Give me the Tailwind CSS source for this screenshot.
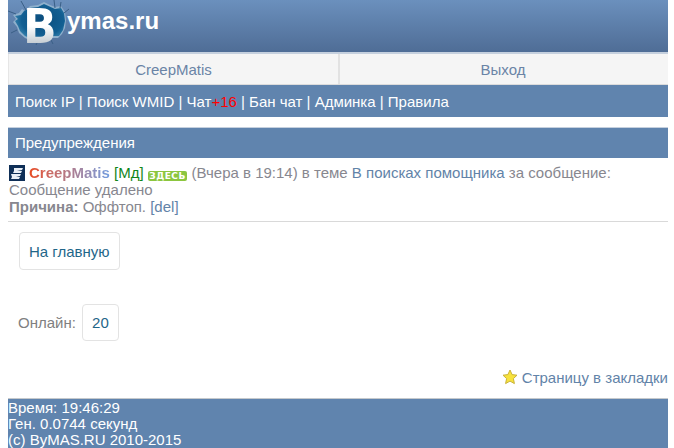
<!DOCTYPE html>
<html lang="ru">
  <head>
    <meta charset="UTF-8" />
    <title>ByMAS.RU</title>
    <script src="https://cdn.jsdelivr.net/npm/@tailwindcss/browser@4"></script>
  </head>
  <body class="bg-white text-[15px] leading-[17px] text-[#87878f] font-['Liberation_Sans',Arial,sans-serif] overflow-hidden h-[448px]">
    <div class="mx-2 w-[660px]">
      <!-- Logo -->
      <div class="relative h-[54px] border-b-2 border-[#c5d0de] bg-gradient-to-b from-[#6b90bd] to-[#4f6d96]">
        <svg class="absolute left-0 top-0" width="66" height="48" viewBox="0 0 66 48">
          <defs>
            <radialGradient id="hole" cx="0.55" cy="0.45" r="0.6">
              <stop offset="0" stop-color="#0b4c7c" />
              <stop offset="0.7" stop-color="#125f92" />
              <stop offset="1" stop-color="#3c86b0" />
            </radialGradient>
          </defs>
          <path d="M5 15 L11 13 L14 9 L17 11 L22 6 L30 5 L36 2 L42 5 L47 7 L53 6 L57 12 L58 20 L57 28 L54 34 L50 38 L43 38 L38 42 L30 41 L24 41 L17 38 L11 33 L9 27 L5 22 L8 19 Z" fill="#8fb0cc" />
          <path d="M7 16 L13 15 L16 11 L22 8 L30 7 L36 4 L47 9 L53 8 L56 13 L57 21 L55 30 L51 36 L43 36 L37 40 L24 39 L17 36 L12 31 L10 26 L7 21 L10 19 Z" fill="url(#hole)" />
          <path d="M0 11 L8 14 M13 1 L18 10 M46 0 L47 8 M53 2 L52 8 M61 9 L56 13 M30 41 L28 45 M42 38 L45 44 M9 30 L3 33" stroke="#3a5f86" stroke-width="1" fill="none" />
        </svg>
        <span class="absolute left-[15px] top-0 text-[48px] leading-[52px] font-bold font-['DejaVu_Sans',sans-serif] bg-gradient-to-b from-white from-50% to-[#a9b4bd] bg-clip-text text-transparent [transform:scaleX(.92)] origin-left">B</span>
        <span class="absolute left-[59px] top-[7px] text-[24px] leading-[28px] font-bold text-white">ymas.ru</span>
      </div>

      <!-- Nav -->
      <div class="flex h-[31px] bg-[#f5f5f5] border-b border-[#dcdcdc]">
        <a class="w-[330px] flex items-center justify-center text-[#6a84a6] border-l border-[#e6e6e6]">CreepMatis</a>
        <a class="flex-1 flex items-center justify-center pr-[2px] text-[#6a84a6] border-l-2 border-[#e2e2e2]">Выход</a>
      </div>

      <!-- Menu -->
      <div class="h-[32px] bg-[#6084ae] text-white px-[7px] flex items-center">
        <span>Поиск IP | Поиск WMID | Чат<span class="text-[#f00]">+16</span> | Бан чат | Админка | Правила</span>
      </div>

      <div class="mt-[10px] h-[31px] pb-[2px] bg-[#6084ae] text-white px-[7px] flex items-center border-t border-[#c5d0de]">Предупреждения</div>

      <!-- Warning -->
      <div class="pt-[6px] pb-[6px] px-px border-b border-[#d9d9d9]">
        <div>
          <svg class="inline-block align-[-3px] mr-[4px]" width="16" height="16" viewBox="0 0 16 16">
            <rect width="16" height="16" fill="#0f2f57" />
            <path d="M5 3 H14 L13 5 L8 6 H13 L12 8 H4 L5 6 Z M2 9 H12 L11 11 L7 12 H11 L10 14 H2 L3 12 Z" fill="#e8eef5" />
          </svg><b class="bg-gradient-to-r from-[#e8491b] via-[#b07b8c] to-[#6f9ce0] bg-clip-text text-transparent">CreepMatis</b>
          <span class="text-[#11861a]">[Мд]</span>
          <span class="inline-block align-[-1px] bg-[#8cc63f] text-white rounded-[2px] px-[1.5px] text-[9px] leading-[10px] tracking-[.5px] font-bold font-['DejaVu_Sans',sans-serif]">ЗДЕСЬ</span>
          (Вчера в 19:14) в теме <a class="text-[#6283a8]">В поисках помощника</a> за сообщение:<br />
          Сообщение удалено<br />
          <b>Причина:</b> Оффтоп. <a class="text-[#6283a8]">[del]</a>
        </div>
      </div>

      <!-- Buttons -->
      <div class="pl-[11px] pt-[10px]">
        <a class="inline-flex items-center h-[38px] px-[9px] border border-[#e3e3e3] rounded-[4px] text-[#1f6689]">На главную</a>
      </div>
      <div class="pl-[10px] pt-[34px] flex items-center gap-[6px]">
        <span class="text-[#808080]">Онлайн:</span>
        <a class="flex items-center justify-center w-[37px] h-[37px] border border-[#e3e3e3] rounded-[4px] text-[#1f6689]">20</a>
      </div>

      <!-- Bookmark -->
      <div class="mt-[28px] h-[16px] flex items-center justify-end text-[#6283a8]">
        <svg class="mr-[4px]" width="16" height="16" viewBox="0 0 16 16">
          <path d="M8 1 L10.1 5.6 L15 6.2 L11.4 9.6 L12.4 14.6 L8 12.1 L3.6 14.6 L4.6 9.6 L1 6.2 L5.9 5.6 Z" fill="#f7e23c" stroke="#c9b23a" stroke-width="1" stroke-linejoin="round" />
        </svg>
        <a>Страницу в закладки</a>
      </div>

      <!-- Footer -->
      <div class="mt-[13px] pt-px pb-3 bg-[#6084ae] text-white leading-[16px] border-t border-[#c5c9cc]">
        Время: 19:46:29<br />
        Ген. 0.0744 секунд<br />
        (c) ByMAS.RU 2010-2015
      </div>
    </div>
  </body>
</html>
